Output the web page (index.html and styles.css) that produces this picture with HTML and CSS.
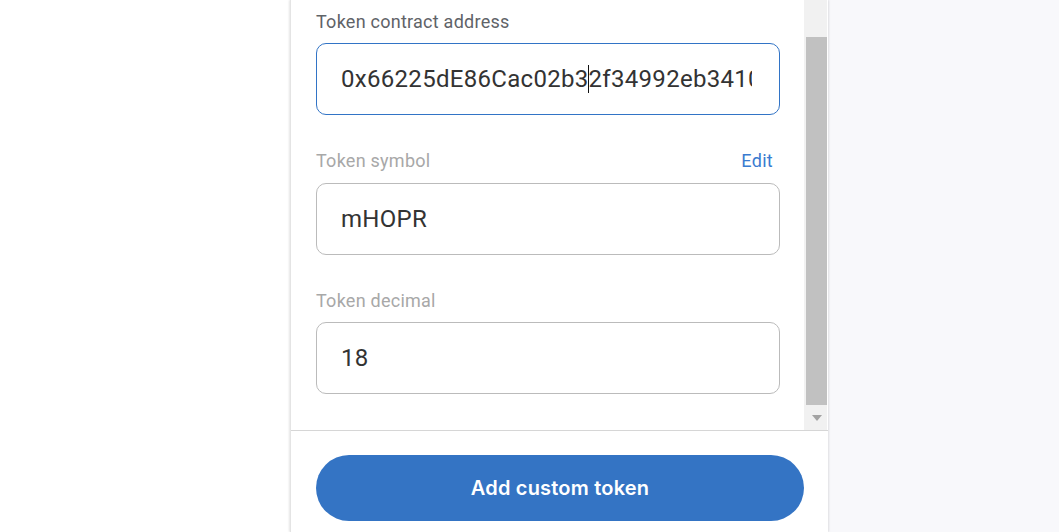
FILE: index.html
```html
<!DOCTYPE html>
<html>
<head>
<meta charset="utf-8">
<link rel="stylesheet" href="styles.css">
</head>
<body>
<div class="page">
  <div class="left"></div>
  <div class="panel">
    <div class="scroll">
      <div class="content">
        <div class="field">
          <div class="label-row"><span class="label dark">Token contract address</span></div>
          <div class="input focused"><span class="value">0x66225dE86Cac02b3<span class="caret"></span>2f34992eb34100</span></div>
        </div>
        <div class="field">
          <div class="label-row"><span class="label">Token symbol</span><span class="edit">Edit</span></div>
          <div class="input"><span class="value">mHOPR</span></div>
        </div>
        <div class="field">
          <div class="label-row"><span class="label">Token decimal</span></div>
          <div class="input"><span class="value">18</span></div>
        </div>
      </div>
      <div class="scrollbar">
        <div class="track"><div class="thumb"></div></div>
        <div class="arrow"><svg width="10" height="6" viewBox="0 0 10 6"><path d="M0 0H10L5 6Z" fill="#a3a3a3"/></svg></div>
      </div>
    </div>
    <div class="footer">
      <button class="btn">Add custom token</button>
    </div>
  </div>
  <div class="right"></div>
</div>
</body>
</html>
```

FILE: styles.css
```css
html, body {
  margin: 0;
  padding: 0;
  height: 100%;
  overflow: hidden;
  background: #fff;
}
.page {
  display: flex;
  height: 532px;
  width: 1059px;
}
.left {
  width: 290px;
  flex: none;
  background: #fff;
}
.panel {
  width: 537px;
  flex: none;
  display: flex;
  flex-direction: column;
  background: #fff;
  border-left: 1px solid #e4e4e4;
  box-shadow: -1px 0 2px rgba(0,0,0,0.10), 1px 0 2px rgba(0,0,0,0.10);
  position: relative;
  z-index: 1;
}
.right {
  flex: 1;
  background: #f8f8fb;
}
.scroll {
  height: 431px;
  display: flex;
  border-bottom: 1px solid #d6d6d6;
  box-sizing: border-box;
}
.content {
  flex: 1;
  min-width: 0;
  padding: 8px 24px 0 25px;
}
.field {
  margin-bottom: 32.5px;
}
.label-row {
  display: flex;
  justify-content: space-between;
  align-items: center;
  height: 26px;
  margin-bottom: 9px;
  padding-right: 7px;
}
.label {
  font-family: Roboto, "Liberation Sans", sans-serif;
  font-size: 18px;
  letter-spacing: 0.25px;
  color: #a8a8a8;
}
.label.dark {
  color: #5f6368;
}
.edit {
  font-family: Roboto, "Liberation Sans", sans-serif;
  font-size: 18px;
  letter-spacing: 0.3px;
  color: #3a7bd0;
}
.input {
  height: 72px;
  box-sizing: border-box;
  border: 1px solid #bbbbbb;
  border-radius: 10px;
  padding: 0 27px 0 24px;
  display: flex;
  align-items: center;
  overflow: hidden;
  white-space: nowrap;
}
.input.focused {
  border-color: #3274c6;
}
.value {
  font-family: Roboto, "Liberation Sans", sans-serif;
  font-size: 24px;
  color: #333;
  letter-spacing: 0.3px;
  overflow: hidden;
  display: block;
  flex: 1;
  min-width: 0;
}
.caret {
  display: inline-block;
  width: 1.5px;
  height: 28px;
  background: #111;
  vertical-align: -6px;
  margin: 0 -0.75px;
}
.scrollbar {
  width: 23px;
  flex: none;
  margin-right: 1px;
  background: #f1f1f1;
  display: flex;
  flex-direction: column;
}
.track {
  flex: 1;
  padding: 37px 0 0 2px;
}
.thumb {
  height: 368px;
  background: #c1c1c1;
}
.arrow {
  height: 25px;
  display: flex;
  align-items: center;
  justify-content: center;
  padding-left: 2px;
}
.footer {
  flex: 1;
  padding: 24px 23px 0 25px;
}
.btn {
  width: 488px;
  height: 66px;
  border: none;
  border-radius: 33px;
  background: #3474c4;
  color: #fff;
  font-family: Inter, Lato, sans-serif;
  font-weight: 600;
  font-size: 20px;
  letter-spacing: 0.2px;
}
```
